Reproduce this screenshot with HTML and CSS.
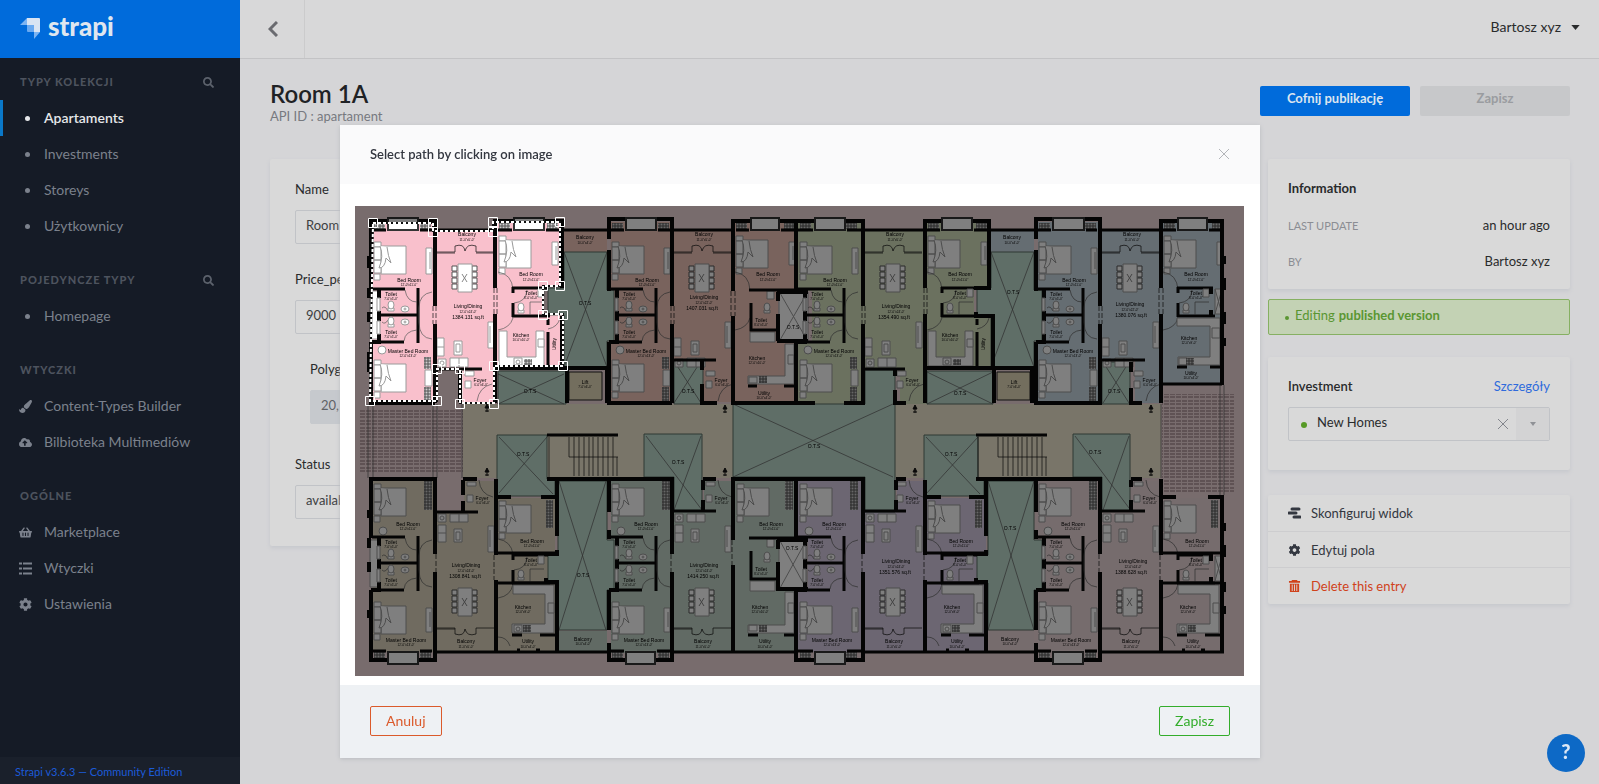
FILE: index.html
```html
<!DOCTYPE html>
<html lang="pl">
<head>
<meta charset="utf-8">
<title>Room 1A</title>
<link rel="stylesheet" href="styles.css">
</head>
<body>
<svg class="sprite" aria-hidden="true">
  <symbol id="i-search" viewBox="0 0 512 512"><path d="M505 442.7L405.3 343c-4.500-4.500-10.600-7-17-7H372c27.600-35.300 44-79.700 44-128C416 93.100 322.900 0 208 0S0 93.100 0 208s93.100 208 208 208c48.300 0 92.700-16.400 128-44v16.300c0 6.400 2.500 12.500 7 17l99.700 99.700c9.400 9.400 24.600 9.400 33.900 0l28.300-28.300c9.400-9.400 9.400-24.600.1-34zM208 336c-70.700 0-128-57.200-128-128 0-70.700 57.200-128 128-128 70.700 0 128 57.200 128 128 0 70.700-57.200 128-128 128z"/></symbol>
  <symbol id="i-cog" viewBox="0 0 512 512"><path d="M487.4 315.7l-42.6-24.6c4.300-23.200 4.300-47 0-70.200l42.600-24.600c4.900-2.800 7.100-8.600 5.500-14-11.100-35.600-30-67.800-54.700-94.600-3.800-4.100-10-5.100-14.800-2.300L380.800 110c-17.900-15.400-38.500-27.300-60.800-35.100V25.800c0-5.600-3.900-10.500-9.400-11.700-36.700-8.200-74.300-7.800-109.200 0-5.500 1.200-9.400 6.100-9.400 11.700V75c-22.200 7.900-42.800 19.800-60.800 35.100L88.700 85.500c-4.900-2.800-11-1.900-14.800 2.300-24.700 26.700-43.600 58.900-54.700 94.600-1.700 5.400.6 11.200 5.500 14L67.300 221c-4.300 23.200-4.300 47 0 70.200l-42.600 24.600c-4.900 2.800-7.100 8.600-5.500 14 11.100 35.600 30 67.800 54.700 94.600 3.800 4.100 10 5.100 14.800 2.300l42.600-24.600c17.900 15.400 38.500 27.300 60.800 35.100v49.200c0 5.600 3.900 10.500 9.400 11.700 36.700 8.200 74.300 7.800 109.200 0 5.500-1.200 9.400-6.100 9.400-11.700v-49.200c22.200-7.900 42.800-19.800 60.800-35.100l42.600 24.600c4.900 2.800 11 1.900 14.800-2.300 24.700-26.700 43.600-58.900 54.700-94.600 1.500-5.500-.7-11.300-5.600-14.100zM256 336c-44.100 0-80-35.900-80-80s35.900-80 80-80 80 35.900 80 80-35.900 80-80 80z"/></symbol>
  <symbol id="i-cloud" viewBox="0 0 640 512"><path d="M537.6 226.6c4.100-10.700 6.400-22.400 6.400-34.600 0-53-43-96-96-96-19.700 0-38.100 6-53.300 16.200C367 64.200 315.300 32 256 32c-88.400 0-160 71.600-160 160 0 2.700.1 5.400.2 8.100C40.200 219.800 0 273.200 0 336c0 79.500 64.500 144 144 144h368c70.700 0 128-57.300 128-128 0-61.900-44-113.600-102.400-125.400zM393.400 288H328v112c0 8.800-7.200 16-16 16h-48c-8.800 0-16-7.200-16-16V288h-65.400c-14.300 0-21.400-17.200-11.300-27.300l105.400-105.400c6.200-6.200 16.400-6.200 22.600 0l105.400 105.400c10.100 10.100 2.900 27.300-11.300 27.300z"/></symbol>
  <symbol id="i-brush" viewBox="0 0 512 512"><path d="M167 309.300c-40.100 2.600-76.500 17.900-97.200 72.300-2.300 6.200-8 10-14.600 10-11.100 0-45.500-27.700-55.200-34.400C0 439.600 37.900 512 128 512c75.900 0 128-43.800 128-120.200 0-3.100-.7-6.100-1-9.100l-88-73.400zM457.900 0c-15.200 0-29.400 6.700-40.200 16.500C213.300 199 192 203.300 192 257.100c0 13.700 3.200 26.800 8.700 38.700l63.800 53.200c7.200 1.800 14.600 3 22.400 3 62.100 0 98.100-45.500 211.200-256.500 7.400-14.300 13.900-29.800 13.900-46C512 20.600 486 0 457.900 0z"/></symbol>
  <symbol id="i-basket" viewBox="0 0 576 512"><path d="M576 216v16c0 13.300-10.700 24-24 24h-8l-26.100 182.800C514.500 462.400 494.300 480 470.400 480H105.600c-23.900 0-44.100-17.600-47.500-41.200L32 256h-8c-13.300 0-24-10.700-24-24v-16c0-13.300 10.700-24 24-24h67.300L198.100 45.200c10.400-14.300 30.400-17.500 44.700-7.100 14.300 10.400 17.500 30.400 7.100 44.700L170.500 192h235L326.100 82.800c-10.400-14.300-7.200-34.300 7.100-44.700 14.300-10.400 34.300-7.200 44.700 7.100L484.700 192H552c13.300 0 24 10.700 24 24zM312 392V280c0-13.300-10.700-24-24-24s-24 10.700-24 24v112c0 13.300 10.700 24 24 24s24-10.700 24-24zm112 0V280c0-13.300-10.700-24-24-24s-24 10.700-24 24v112c0 13.300 10.700 24 24 24s24-10.700 24-24zm-224 0V280c0-13.300-10.700-24-24-24s-24 10.700-24 24v112c0 13.300 10.700 24 24 24s24-10.700 24-24z"/></symbol>
  <symbol id="i-list" viewBox="0 0 13 12"><path d="M0 0h3v2H0zM4 0h9v2H4zM0 5h3v2H0zM4 5h9v2H4zM0 10h3v2H0zM4 10h9v2H4z"/></symbol>
  <symbol id="i-layout" viewBox="0 0 13 11"><path d="M4 0h7a1 1 0 0 1 0 3H4a1 1 0 0 1 0-3zM1 4h7a1 1 0 0 1 0 3H1a1 1 0 0 1 0-3zM6 8h6a1 1 0 0 1 0 3H6a1 1 0 0 1 0-3z"/></symbol>
  <symbol id="i-trash" viewBox="0 0 12 13"><path fill-rule="evenodd" d="M3 0h6v1h3v2H0V1h3zM1 4h10v9H1zM3 5v7h1V5zM5.500 5v7h1V5zM8 5v7h1V5z"/></symbol>
</svg>

<div class="layout">
  <aside class="side">
    <a class="brand" href="#" aria-label="strapi">
      <svg class="brand-mark" viewBox="0 0 21 22"><path fill="#d9e4f3" d="M7 0h12q1 0 1 1v13h-6V7H7z"/><path fill="#7db4f2" d="M0 7L7 0v7zM14 14h6l-6 7z"/><path fill="#6aa9f0" d="M7 7h7v7H8q-1 0-1-1z"/></svg>
      <span>strapi</span>
    </a>
    <nav class="menu">
      <section class="group">
        <h2>Typy kolekcji <button class="find" aria-label="Szukaj"><svg><use href="#i-search"/></svg></button></h2>
        <a class="on" href="#"><i class="dot"></i>Apartaments</a>
        <a href="#"><i class="dot"></i>Investments</a>
        <a href="#"><i class="dot"></i>Storeys</a>
        <a href="#"><i class="dot"></i>Użytkownicy</a>
      </section>
      <section class="group">
        <h2>Pojedyncze typy <button class="find" aria-label="Szukaj"><svg><use href="#i-search"/></svg></button></h2>
        <a href="#"><i class="dot"></i>Homepage</a>
      </section>
      <section class="group">
        <h2>Wtyczki</h2>
        <a href="#"><svg><use href="#i-brush"/></svg>Content-Types Builder</a>
        <a href="#"><svg><use href="#i-cloud"/></svg>Bilbioteka Multimediów</a>
      </section>
      <section class="group">
        <h2>Ogólne</h2>
        <a href="#"><svg><use href="#i-basket"/></svg>Marketplace</a>
        <a href="#"><svg><use href="#i-list"/></svg>Wtyczki</a>
        <a href="#"><svg><use href="#i-cog"/></svg>Ustawienia</a>
      </section>
    </nav>
    <a class="version" href="#">Strapi v3.6.3 — Community Edition</a>
  </aside>

  <div class="page">
    <header class="top">
      <button class="back" aria-label="Wstecz"><svg viewBox="0 0 10 16"><path d="M9 1L2 8l7 7" fill="none" stroke="#6a6b70" stroke-width="3"/></svg></button>
      <button class="user">Bartosz xyz <svg viewBox="0 0 10 6"><path d="M0 0h10L5 6z"/></svg></button>
    </header>
    <main class="content">
      <div class="head">
        <div><h1>Room 1A</h1><p>API ID : apartament</p></div>
        <div class="actions"><button class="primary">Cofnij publikację</button><button class="off" disabled>Zapisz</button></div>
      </div>
      <div class="cols">
        <form class="card fields">
          <div class="field"><label for="f1">Name</label><input id="f1" value="Room 1A"></div>
          <div class="field"><label for="f2">Price_per_meter</label><input id="f2" value="9000"></div>
          <div class="field inner"><label for="f3">Polygon</label><input id="f3" value="20,19" disabled></div>
          <div class="field last"><label for="f4">Status</label><select id="f4"><option>available</option></select></div>
        </form>
        <div class="info">
          <section class="card facts">
            <h3>Information</h3>
            <dl><div><dt>Last update</dt><dd>an hour ago</dd></div><div><dt>By</dt><dd>Bartosz xyz</dd></div></dl>
          </section>
          <p class="state"><i></i>Editing <b>published version</b></p>
          <section class="card relation">
            <div class="rel-head"><label for="rel">Investment</label><a href="#">Szczegóły</a></div>
            <div class="combo"><i></i><select id="rel"><option>New Homes</option></select>
              <button type="button" class="clear" aria-label="Wyczyść"><svg viewBox="0 0 10 10"><path d="M0 0l10 10M10 0L0 10" stroke="#83858c" fill="none"/></svg></button>
              <span class="arrow"><svg viewBox="0 0 6 4"><path d="M0 0h6L3 4z"/></svg></span></div>
          </section>
          <ul class="card links">
            <li><a href="#"><svg><use href="#i-layout"/></svg>Skonfiguruj widok</a></li>
            <li><a href="#"><svg><use href="#i-cog"/></svg>Edytuj pola</a></li>
            <li><a class="danger" href="#"><svg><use href="#i-trash"/></svg>Delete this entry</a></li>
          </ul>
        </div>
      </div>
    </main>
  </div>
</div>
<button class="help" aria-label="Pomoc">?</button>

<div class="shade">
<div class="modal" role="dialog" aria-labelledby="mt">
  <header><h2 id="mt">Select path by clicking on image</h2><button aria-label="Zamknij"><svg viewBox="0 0 10 10"><path d="M0 0l10 10M10 0L0 10" stroke="#b3b5b9" fill="none"/></svg></button></header>
  <div class="modal-body">
<svg class="plan" viewBox="355 206 889 470" role="img" aria-label="Floor plan">
<defs>
  <pattern id="hatch" width="3" height="3" patternUnits="userSpaceOnUse"><path d="M0 0h3v3H0z" fill="#ccc"/><path d="M0 1h3M1 0v3" stroke="#555"/></pattern>
  <pattern id="slats" width="6" height="20" patternUnits="userSpaceOnUse"><path d="M0 1h5M0 4h5M0 8h5M0 11h5M0 14h5M0 17h5" stroke="#8d7175"/></pattern>
  <g id="bed" class="fit">
    <path d="M1-4h7v5H1zM1 28h6v6H1z"/>
    <path d="M8 0h25v28H8z"/><path d="M1 1h7v13H1zM1 14h7v13H1z"/>
    <path d="M7 0Q11 10 6 22Q12 22 13 12L18 17Q15 10 14 1"/>
  </g>
  <g id="wc" class="fit"><path d="M-3 1h6v3h-6z"/><ellipse cy="-2" rx="3" ry="4"/></g>
  <g id="basin" class="fit"><ellipse rx="4" ry="3"/><circle r="1"/></g>
  <g id="table" class="fit">
    <path d="M15 2h5v5h-5zM15 8h5v5h-5zM15 14h5v5h-5zM15 20h5v5h-5zM35 2h5v5h-5zM35 8h5v5h-5zM35 14h5v5h-5zM35 20h5v5h-5z" stroke="#555"/>
    <path d="M21 0h14v28H21z"/><path d="M25 10l5 8M30 10l-5 8" stroke="#888"/>
  </g>
  <g id="baths">
    <g class="w3"><path d="M-1 289H32M5 315H46M7 342H31M45 288V343"/></g>
    <g class="w4"><path d="M-2 342H8M6 288V298M6 311V321M6 334V342"/></g>
    <g class="thin"><path d="M32 290Q34 302 44 302M31 341Q32 331 44 330M59 292Q46 294 46 308V322Q46 338 59 339"/><path d="M9 308q3-3 6 3M9 322q3 3 6-2"/></g>
    <use href="#wc" x="18" y="307"/><use href="#wc" x="18" y="323"/><use href="#basin" x="32" y="309"/><use href="#basin" x="32" y="322"/>
    <path d="M4 298h3v13H4zM4 321h3v13H4z" class="fit"/>
    <g class="lb"><text x="18" y="296">Toilet</text><text x="18" y="334">Toilet</text></g>
    <g class="dim"><text x="18" y="300">7'-0"x5'-0"</text><text x="18" y="338">7'-0"x5'-0"</text></g>
  </g>
  <g id="suiteTop">
    <path d="M1 223h11v6H1zM47 223h11v6H47z" fill="url(#hatch)"/>
    <use href="#bed" y="246"/><path d="M53 248h6v26h-6zM57 252v17" class="fit"/>
    <use href="#baths"/>
    <circle cx="9" cy="350" r="4" class="fit"/><use href="#bed" y="364"/>
    <path d="M51 357h7v12h-7zM51 387h7v14h-7z" fill="url(#hatch)"/><path d="M52 370h7v16h-7z" class="fit"/>
    <g class="lb"><text x="36" y="282">Bed Room</text><text x="35" y="353">Master Bed Room</text></g>
    <g class="dim"><text x="36" y="286">12'-0"x11'-0"</text><text x="35" y="357">12'-0"x13'-0"</text></g>
  </g>
  <g id="suiteLow">
    <use href="#bed" y="488"/><circle cx="10" cy="531" r="4" class="fit"/><path d="M51 481h8v29h-8z" fill="url(#hatch)"/>
    <use href="#baths" y="248"/>
    <use href="#bed" y="606"/><path d="M53 608h6v24h-6zM57 612v15" class="fit"/>
    <path d="M1 652h11v6H1zM47 652h11v6H47z" fill="url(#hatch)"/>
    <g class="lb"><text x="35" y="526">Bed Room</text><text x="33" y="642">Master Bed Room</text></g>
    <g class="dim"><text x="35" y="530">12'-0"x11'-0"</text><text x="33" y="646">12'-0"x13'-0"</text></g>
  </g>
  <g id="livingTop">
    <path class="thin dark" d="M-1 252H18V246M-1 253H18M39 246V252H57M39 253H57M18 246Q27 243 28 251Q30 243 39 246"/>
    <use href="#table" x="0" y="264"/>
    <path class="fit" d="M0 338h7v18H0zM17 341h8v14h-8zM19 344h4v8h-4zM13 358h18v9H13zM22 358v9M0 347h7M51 322h6v26h-6zM53 326v17M1 359h8v8H1z"/><circle class="fit" cx="5" cy="363" r="2"/>
    <g class="lb"><text x="30" y="236">Balcony</text></g><g class="dim"><text x="30" y="241">11'-0"x5'-0"</text></g>
  </g>
  <g id="livingLow">
    <path class="fit" d="M13 514h18v8H13zM22 514v8M1 525h8v17H1zM1 533h8M17 529h8v13h-8zM19 532h4v8h-4zM51 526h6v26h-6zM53 530v17M1 514h8v8H1z"/><circle class="fit" cx="5" cy="518" r="2"/>
    <use href="#table" y="588"/>
    <path class="thin dark" d="M0 628H18V634M0 629H18M39 634V628H57M18 634Q27 637 28 629Q30 637 39 634"/>
    <g class="lb"><text x="29" y="643">Balcony</text></g><g class="dim"><text x="29" y="648">11'-0"x5'-0"</text></g>
  </g>
  <g id="bedTop">
    <path d="M1 223h11v6H1zM49 223h11v6H49z" fill="url(#hatch)"/>
    <use href="#bed" y="240"/><path d="M54 242h6v23h-6zM58 246v14" class="fit"/>
    <path class="thin" d="M0 272Q14 274 15 290M15 318Q12 328 0 330"/>
    <g class="lb"><text x="33" y="276">Bed Room</text></g><g class="dim"><text x="33" y="281">12'-0"x11'-0"</text></g>
  </g>
  <g id="bath2">
    <path class="w3" d="M14 288H50M15 287V293M15 303V317M14 316H52"/>
    <use href="#wc" x="23" y="309"/><path class="fit" d="M40 289h6v8h-6z"/><path class="thin" d="M32 302H46M32 302V315M16 303Q28 302 29 290"/>
    <g class="lb"><text x="33" y="295">Toilet</text></g><g class="dim"><text x="33" y="299">8'-0"x5'-0"</text></g>
  </g>
  <g id="kitchTop">
    <path class="fit" d="M1 331H9V357H38V331H46V366H1z"/><path class="fit" d="M16 358h8v7h-8zM40 339h6v8h-6z"/><circle class="fit" cx="20" cy="362" r="2"/>
    <path d="M26 359h8v6h-8z" fill="url(#hatch)"/>
    <path class="w3" d="M50 319V325M50 332V366"/><path class="thin" d="M50 329Q60 327 62 318"/>
    <g class="lb"><text x="23" y="337">Kitchen</text><text transform="translate(58 344) rotate(-90)">Utility</text></g><g class="dim"><text x="23" y="341">10'-0"x10'-0"</text></g>
  </g>
  <g id="bedLow">
    <use href="#bed" y="505"/><path d="M48 500h7v28h-7z" fill="url(#hatch)"/>
    <path class="thin" d="M0 539Q13 541 15 554M15 584Q13 596 0 598M0 637Q9 637 12 646"/>
    <use href="#bath2" y="267"/>
    <path class="fit" d="M15 585H56V633H14V624H47V594H15z"/><path class="fit" d="M16 625h8v7h-8zM50 603h6v10h-6z"/><circle class="fit" cx="20" cy="629" r="2"/>
    <path d="M25 625h8v7h-8z" fill="url(#hatch)"/><path class="w3" d="M14 635H24M42 635H57M19 650H22M38 650H42"/>
    <g class="lb"><text x="34" y="543">Bed Room</text><text x="25" y="609">Kitchen</text><text x="30" y="643">Utility</text></g>
    <g class="dim"><text x="34" y="547">12'-0"x11'-0"</text><text x="25" y="613">12'-0"x9'-0"</text><text x="30" y="648">10'-0"x4'-0"</text></g>
  </g>
  <g id="foyer"><path class="fit" d="M1 2h9v5H1zM1 12h6v7H1z"/><path class="thin" d="M13 32Q15 18 28 15"/><g class="lb"><text x="16" y="13">Foyer</text></g><g class="dim"><text x="17" y="17">6'-0"x6'-0"</text></g></g>
  <g id="foyerLow"><path class="fit" d="M1 2h9v4H1zM1 15h6v7H1z"/><path class="thin" d="M13 0Q14 14 27 17"/><g class="lb"><text x="16" y="20">Foyer</text></g><g class="dim"><text x="17" y="24">6'-0"x6'-0"</text></g></g>
  <g id="stairs"><path class="w3" d="M0 435H71"/><path class="thin dark" d="M22 437V457M27 437V476M32 437V476M37 437V476M42 437V476M46 437V476M51 437V476M56 437V476M61 437V476M66 437V476M70 457V476M22 457H71M2 437V477"/></g>
  <path id="door" d="M0 3v6M-2 5l2-4 2 4zM-2 8h4" fill="#111" stroke="#111"/>
</defs>

<path fill="#f0d8da" d="M355 206h890v470H355z"/>
<path fill="#f3ebd2" d="M463 404h698v74H463z"/>
<path fill="url(#slats)" d="M359 409h104v64H359zM1162 394h72v99h-72z"/>
<path class="thin" d="M368 404V478M373 404V478M433 404V478M437 404V478M462 404V478M1161 404V478M1220 385V495M1224 385V495"/>

<path fill="#f9c0cc" d="M373 222h60v8h62v-8h65v64h-17v29h20v52h-65v37h-35v-36h-27v34h-64z"/>
<path fill="#f2c7bb" d="M564 230h43v22h-43zM611 222h62v8h60v-8h62v69h-17v51h17v61h-62v-1h-30v-42h-30v43h-64z"/>
<path fill="#d6e2bf" d="M798 222h64v8h63v-8h63v64h-14v29h18v52h-65v37h-27v-36h-35v36h-67v-62h14v-51h-14z"/>
<path fill="#cbdae4" d="M991 230h43v22h-43zM1038 222h60v8h62v-8h60v146h3v17h-60v18h-28v-42h-31v43h-66z"/>
<path fill="#e0d7c0" d="M373 481h60v31h31v-31h31v17h60v154H373z"/>
<path fill="#c3d5c8" d="M558 631h49v20h-49zM611 481h60v31h33v-31h92v58h-17v50h17v64H611z"/>
<path fill="#d8cde4" d="M798 481h64v31h35v-31h28v17h61v154h-61H798v-64h10v-50h-10z"/>
<path fill="#ecd8da" d="M988 631h46v20h-46zM1038 481h60v31h33v-31h30v17h60v154h-183z"/>

<g fill="#bfdccf" stroke="#5c7066">
  <path d="M564 252h43v38h7v51h-7v26h-43v-52h-16v-27h16zM498 371h68v33h-68zM674 360h29v44h-29zM733 404h132v-34h30v142h-30v-35H733zM991 252h43v38h8v51h-8v26h-43v-52h-14v-27h14zM927 371h66v33h-66zM1102 362h28v42h-28z"/>
  <path d="M497 435h50v44h8v17h-58zM644 434h58v77h-28v-34h-30zM924 435h54v44h6v17h-60zM1073 434h57v77h-28v-34h-29zM558 481h49v59h7v50h-7v40h-49v-47h-10v-28h10zM988 481h46v59h8v50h-8v40h-46v-47h-11v-28h11z"/>
</g>
<path class="thin" d="M564 252l43 115M607 252l-43 115M498 374l66 30M564 374l-66 30M674 361l27 42M701 361l-27 42M733 404l160 73M893 404l-160 73M991 252l43 115M1034 252l-43 115M927 372l66 32M993 372l-66 32M1103 362l26 41M1129 362l-26 41M499 437l54 57M547 437l-48 56M646 436l56 74M701 436l-27 74M926 437l54 57M978 437l-52 57M1075 436l54 72M1129 436l-26 74M559 481l47 149M606 481l-47 149M988 481l46 149M1034 481l-46 149"/>
<path fill="#e6dcbc" stroke="#222" d="M569 372h33v28h-33zM997 372h33v28h-33z"/>
<g class="fit"><path d="M779 292h29v49h-29zM780 293l27 47M807 293l-27 47M779 540h28v49h-28zM780 541l26 47M806 541l-26 47M1215 289h7v25h-7zM1215 289l7 25M1222 289l-7 25M1215 556h7v25h-7zM1215 556l7 25M1222 556l-7 25M370 291h8v48h-8zM370 540h8v47h-8z"/></g>

<use href="#suiteTop" x="373"/><use href="#suiteTop" x="611"/><use href="#suiteTop" x="799"/><use href="#suiteTop" x="1038"/>
<use href="#suiteLow" x="373"/><use href="#suiteLow" x="611"/><use href="#suiteLow" x="799"/><use href="#suiteLow" x="1038"/>
<use href="#livingTop" x="437"/><use href="#livingTop" x="674"/><use href="#livingTop" x="865"/><use href="#livingTop" x="1102"/>
<use href="#livingLow" x="437"/><use href="#livingLow" x="674"/><use href="#livingLow" x="865"/><use href="#livingLow" x="1102"/>
<use href="#bedTop" x="498"/><use href="#bedTop" x="735"/><use href="#bedTop" x="927"/><use href="#bedTop" x="1163"/>
<use href="#bath2" x="498"/><use href="#bath2" x="927"/><use href="#bath2" x="1163"/>
<use href="#kitchTop" x="498"/><use href="#kitchTop" x="927"/>
<use href="#bedLow" x="498"/><use href="#bedLow" x="927"/><use href="#bedLow" x="1163"/>
<use href="#foyer" x="464" y="369"/><use href="#foyer" x="705" y="369"/><use href="#foyer" x="896" y="369"/><use href="#foyer" x="1133" y="369"/>
<use href="#foyerLow" x="466" y="480"/><use href="#foyerLow" x="705" y="480"/><use href="#foyerLow" x="896" y="480"/><use href="#foyerLow" x="1133" y="480"/>
<use href="#stairs" x="547"/><use href="#stairs" x="976"/>

<g>
  <use href="#wc" x="767" y="309"/><use href="#wc" x="767" y="558"/>
  <path class="fit" d="M767 291h7v8h-7zM767 539h7v8h-7zM750 332h25v10h-25zM785 344h9v40H748v-8h37zM788 355h6v9h-6zM750 581h25v10h-25zM785 592h9v41H748v-8h37zM788 603h6v10h-6zM749 377h8v6h-8zM749 625h8v6h-8z"/>
  <path d="M759 376h8v7h-8zM759 625h8v7h-8z" fill="url(#hatch)"/>
  <path class="fit" d="M1177 318h43v47h-42v-8h32v-31h-33zM1212 328h8v10h-8zM1179 358h8v7h-8z"/><path d="M1186 358h8v7h-8z" fill="url(#hatch)"/>
  <use href="#bed" x="736" y="488"/><path d="M785 481h8v29h-8z" fill="url(#hatch)"/>
  <g class="lb"><text x="761" y="322">Toilet</text><text x="757" y="360">Kitchen</text><text x="764" y="395">Utility</text><text x="761" y="571">Toilet</text><text x="760" y="609">Kitchen</text><text x="765" y="643">Utility</text><text x="771" y="526">Bed Room</text><text x="1189" y="340">Kitchen</text><text x="1191" y="375">Utility</text>
  <text x="585" y="239">Balcony</text><text x="1012" y="239">Balcony</text><text x="583" y="641">Balcony</text><text x="1010" y="641">Balcony</text></g>
  <g class="dim"><text x="761" y="326">8'-0"x5'-0"</text><text x="757" y="364">12'-0"x10'-0"</text><text x="764" y="399">10'-0"x4'-0"</text><text x="761" y="575">8'-0"x5'-0"</text><text x="760" y="613">12'-0"x10'-0"</text><text x="765" y="648">10'-0"x4'-0"</text><text x="771" y="530">12'-0"x11'-0"</text><text x="1189" y="344">12'-0"x9'-0"</text><text x="1191" y="379">10'-0"x4'-0"</text><text x="585" y="244">10'-0"x4'-0"</text><text x="1012" y="244">10'-0"x4'-0"</text><text x="583" y="645">10'-0"x4'-0"</text><text x="1010" y="645">10'-0"x4'-0"</text><text x="585" y="388">7'-0"x6'-0"</text><text x="1014" y="388">7'-0"x6'-0"</text></g>
  <g class="lb">
    <text x="468" y="308">Living/Dining</text><text x="468" y="319">1384.131 sq.ft</text><text x="704" y="299">Living/Dining</text><text x="702" y="310">1407.031 sq.ft</text><text x="896" y="308">Living/Dining</text><text x="894" y="319">1354.490 sq.ft</text><text x="1130" y="306">Living/Dining</text><text x="1131" y="317">1380.076 sq.ft</text>
    <text x="466" y="567">Living/Dining</text><text x="465" y="578">1308.841 sq.ft</text><text x="704" y="567">Living/Dining</text><text x="703" y="578">1414.250 sq.ft</text><text x="896" y="563">Living/Dining</text><text x="895" y="574">1351.576 sq.ft</text><text x="1133" y="563">Living/Dining</text><text x="1131" y="574">1388.628 sq.ft</text>
    <text x="585" y="305">O.T.S</text><text x="530" y="393">O.T.S</text><text x="688" y="393">O.T.S</text><text x="793" y="329">O.T.S</text><text x="1013" y="294">O.T.S</text><text x="960" y="395">O.T.S</text><text x="1114" y="393">O.T.S</text><text x="523" y="456">O.T.S</text><text x="678" y="464">O.T.S</text><text x="814" y="448">O.T.S</text><text x="951" y="456">O.T.S</text><text x="1095" y="454">O.T.S</text><text x="583" y="577">O.T.S</text><text x="792" y="550">O.T.S</text><text x="1010" y="530">O.T.S</text><text x="585" y="384">Lift</text><text x="1014" y="384">Lift</text>
  </g>
  <g class="dim"><text x="468" y="313">12'-0"x24'-0"</text><text x="704" y="304">12'-0"x22'-0"</text><text x="896" y="313">12'-0"x24'-0"</text><text x="1130" y="311">12'-0"x22'-0"</text><text x="466" y="572">12'-0"x24'-0"</text><text x="704" y="572">12'-0"x24'-0"</text><text x="896" y="568">12'-0"x24'-0"</text><text x="1133" y="568">12'-0"x24'-0"</text></g>
</g>

<g class="w4">
  <path d="M371 220V289M371 342V403M369 221H435M435 219V306M435 324V403M495 219V288M495 314V403M493 221H562V288M562 316V368M496 368H607V403M567 368V403M369 403H435M460 402V371M608 370V403"/>
  <path d="M609 239V219H672V306M672 324V403M609 250V291M609 342V403H672M733 219V291M733 316V403M731 221H796V292M796 341V403H731M702 384V403H717M702 360V370M796 221H863V306M863 324V403H844M796 403H815"/>
  <path d="M925 219V288M925 314V403M923 221H989V288H974M976 312V316H993V368M925 368H1036M994 368V403M1032 368V403M1036 239V219H1100V306M1100 324V403H1036V342M1036 250V291M1161 219V288M1161 314V403M1159 221H1222V385M1131 362V372M1131 388V403H1142M895 370V376M895 390V403H906"/>
  <path d="M371 480V538M371 590V662M369 479H435V554M435 572V662M463 480V495M463 501V511M463 479H477M496 479V555M496 580V653M369 660H388M418 660H437"/>
  <path d="M557 479V536M557 550V554H544M546 578V582H557V652M547 479H672V554M672 572V662M609 479V512M609 530V539M609 590V630M609 643V662M607 660H627M656 660H672M703 480V490M703 500V511M703 479H716M733 480V540M733 565V652M731 479H863V554M863 572V662M796 479V540M796 589V662M796 660H815M845 660H863"/>
  <path d="M896 480V490M896 500V511M896 479H906M925 480V555M925 580V653M986 479V536M986 550V554H974M976 578V582H986V652M976 479H1100V554M1100 572V662M1036 479V512M1036 530V539M1036 590V630M1036 643V662M1036 660H1053M1083 660H1102M1131 480V487M1131 500V511M1131 479H1142M1161 479V555M1161 580V653M1161 497H1176M1208 497H1224M1222 497V653M777 292H808M777 341H808M778 292V301M778 314V341M778 540V549M778 562V589H808M777 540H808M496 497H511M541 497H556M925 497H941M969 497H985"/>
  <path d="M369 256V268M369 288V298M369 312V322M369 352V372M369 510V518M369 538V548M369 562V572M369 610V618M1224 256V264M1224 278V290M1224 312V324M1224 338V346M1224 523V531M1224 545V557M1224 582V592M1224 606V614M1211 288V294M1211 310V316M1211 555V561M1211 577V583"/>
</g>
<g class="w3">
  <path d="M435 230H495M562 230H609M672 230H733M863 230H925M989 230H1036M1100 230H1161M435 652H497M496 652H609M672 652H796M863 652H986M986 652H1036M1100 652H1224M748 386H757M784 386H796M672 360H716M435 369H482M863 369H905M1100 360H1145M435 512H478M672 511H716M863 511H906M1100 511H1145M748 635H758M784 635H796M1177 367H1187M1210 367H1221M1163 384H1222M498 553H557M927 553H986M1163 553H1222M498 583H557M927 583H986M1163 583H1222M749 538H796M751 303V330H776M749 290H796M751 551V579H776"/>
</g>
<path class="thin dark" d="M436 306v18M433 306v18M494 288v26M497 288v26M671 306v18M674 306v18M731 291v25M735 291v25M862 306v18M865 306v18M924 288v26M927 288v26M1099 306v18M1102 306v18M1159 288v26M1163 288v26M436 554v18M494 555v25M671 554v18M732 540v25M862 554v18M924 555v25M1099 554v18M1160 555v25" stroke-dasharray="5 2"/>
<g class="bay">
  <path d="M388 218h30v12h-30zM514 218h30v12h-30zM626 218h30v12h-30zM751 218h28v12h-28zM815 218h30v12h-30zM942 218h30v12h-30zM1053 218h31v12h-31zM1178 218h29v12h-29z"/>
  <path d="M388 652h30v12h-30zM626 652h29v12h-29zM815 652h30v12h-30zM1053 652h30v12h-30z"/>
</g>
<path class="w3" d="M373 230H386M420 230H432M498 230H512M546 230H560M611 230H624M658 230H670M736 230H749M781 230H794M798 230H813M847 230H861M927 230H940M974 230H987M1038 230H1051M1086 230H1097M1163 230H1176M1209 230H1220M373 651H386M420 651H432M611 651H624M657 651H670M798 651H813M847 651H861M1038 651H1051M1085 651H1097"/>
<use href="#door" x="487" y="403"/><use href="#door" x="725" y="404"/><use href="#door" x="915" y="404"/><use href="#door" x="1151" y="404"/><use href="#door" x="487" y="467"/><use href="#door" x="725" y="467"/><use href="#door" x="915" y="467"/><use href="#door" x="1151" y="467"/>

<path fill="#000" fill-opacity=".5" fill-rule="evenodd" d="M355 206h890v470H355zM373 223L433 223V231H493V222H560V286H543V314H563V366H494V403H460V369H437V401H370z"/>
<path fill="none" stroke="#111" stroke-width="2" d="M373 223H433V231H493V222H560V286H543V314H563V366H494V403H460V369H437V401H370z"/>
<path fill="none" stroke="#fff" stroke-width="2" stroke-dasharray="3 2" d="M373 223H433V231H493V222H560V286H543V314H563V366H494V403H460V369H437V401H370z"/>
<path fill="none" stroke="#fff" d="M368.500 218.500h9v9h-9zM428.500 218.500h9v9h-9zM428.500 227.500h9v9h-9zM488.500 227.500h9v9h-9zM488.500 217.500h9v9h-9zM555.500 217.500h9v9h-9zM555.500 281.500h9v9h-9zM538.500 281.500h9v9h-9zM538.500 310.500h9v9h-9zM558.500 310.500h9v9h-9zM558.500 361.500h9v9h-9zM489.500 361.500h9v9h-9zM489.500 399.500h9v9h-9zM455.500 399.500h9v9h-9zM455.500 364.500h9v9h-9zM432.500 364.500h9v9h-9zM432.500 396.500h9v9h-9zM365.500 396.500h9v9h-9z"/>
</svg>
  </div>
  <footer><button class="cancel">Anuluj</button><button class="save">Zapisz</button></footer>
</div>
</div>
</body>
</html>
```
FILE: styles.css
```css
* { box-sizing: border-box; }
body { margin: 0; font: 13px/18px Lato, "Open Sans", sans-serif; color: #292b2c; background: #d5d5d7; }
h1, h2, h3, p, dl, dd, ul { margin: 0; padding: 0; font-weight: 400; }
a { color: inherit; text-decoration: none; }
button, input, select { font: inherit; color: inherit; margin: 0; padding: 0; border: 0; background: none; }
select { appearance: none; }
svg { display: block; fill: currentColor; }
.sprite { position: absolute; width: 0; height: 0; }

.layout { display: flex; min-height: 100vh; }

.side { flex: 0 0 240px; display: flex; flex-direction: column; background: #151b26; color: #7b818c; }
.brand { display: flex; align-items: center; height: 58px; padding: 0 20px; gap: 7px; background: #006bdb; color: #dfe6ef; font-size: 26px; font-weight: 900; }
.brand span { line-height: 28px; padding-bottom: 6px; }
.brand-mark { width: 21px; height: 22px; }
.menu { flex: 1; display: flex; flex-direction: column; gap: 18px; padding-top: 6px; }
.group h2 { display: flex; justify-content: space-between; align-items: center; height: 36px; padding: 0 26px 0 20px; font-size: 11px; font-weight: 900; letter-spacing: 1px; text-transform: uppercase; color: #4d535e; }
.find svg { width: 11px; height: 11px; color: #5c626c; }
.group a { display: flex; align-items: center; height: 36px; padding-left: 19px; font-size: 14px; }
.group a svg { width: 13px; height: 13px; margin-right: 12px; }
.dot { width: 5px; height: 5px; margin: 0 14px 0 6px; border-radius: 50%; background: currentColor; }
.group .on { color: #e6e8ea; font-weight: 600; padding-left: 16px; border-left: 3px solid #0a78c8; }
.version { padding: 0 15px; height: 27px; line-height: 29px; background: #1a202b; color: #1c5bd8; font-size: 11px; }

.page { flex: 1; min-width: 0; }
.top { display: flex; justify-content: space-between; height: 59px; border-bottom: 1px solid #c3c3c5; background: #d8d8d9; }
.back { width: 65px; border-right: 1px solid #cbcbcc; padding-left: 28px; }
.back svg { width: 10px; height: 16px; }
.user { display: flex; align-items: center; gap: 10px; padding: 0 19px 4px 0; font-size: 14px; }
.user svg { width: 9px; height: 5px; }

.content { padding: 22px 29px 0 30px; }
.head { display: flex; justify-content: space-between; }
.head h1 { font-size: 24px; line-height: 26px; font-weight: 600; color: #1f2225; }
.head p { color: #77797f; }
.actions { display: flex; gap: 10px; padding-top: 5px; }
.actions button { width: 150px; height: 30px; border-radius: 2px; padding-bottom: 6px; font-weight: 700; }
.primary { background: #006bdb; color: #dbe5f0; }
.off { background: #c7c8ca; color: #9a9ca0; }

.cols { display: flex; align-items: flex-start; gap: 38px; padding-top: 34px; }
.card { border-radius: 2px; background: #d9d9d9; box-shadow: 0 2px 4px #c5c7cd; }
.fields { flex: 1; display: grid; gap: 26px; padding: 21px 25px 27px; }
.field { display: grid; gap: 12px; }
.field input, .field select { width: 100%; height: 34px; padding: 0 10px 4px; border: 1px solid #c1c3c7; border-radius: 2px; color: #3d3f42; }
.field.inner { padding: 0 15px; }
.field input:disabled { background: #c6c9cd; border-color: #c6c9cd; color: #5f6266; }
.field.last { padding-top: 5px; }

.info { flex: 0 0 302px; }
.facts { padding: 20px 20px 19px; }
.facts h3 { font-weight: 700; font-size: 13px; }
.facts dl { padding-top: 10px; }
.facts dl div { display: flex; justify-content: space-between; align-items: center; height: 36px; }
.facts dl div + div { height: 27px; padding-top: 8px; }
.facts dt { font-size: 11px; color: #8b8d93; text-transform: uppercase; padding-top: 2px; }
.state { display: flex; align-items: center; gap: 4px; height: 36px; margin: 10px 0 22px; padding: 0 16px 5px; border: 1px solid #86b062; border-radius: 2px; background: #c3d2b4; color: #5a9632; }
.state i { width: 4px; height: 4px; margin: 6px 2px 0 0; border-radius: 50%; background: #5a9632; }
.relation { padding: 20px 20px 29px; }
.rel-head { display: flex; justify-content: space-between; padding-bottom: 12px; }
.rel-head label { font-weight: 600; }
.rel-head a { color: #2f6bdc; }
.combo { display: flex; height: 34px; border: 1px solid #c1c3c7; border-radius: 2px; align-items: center; }
.combo i { width: 6px; height: 6px; margin: 2px 10px 0 12px; border-radius: 50%; background: #579a26; }
.combo select { flex: 1; height: 32px; padding-bottom: 4px; }
.clear svg { width: 10px; height: 10px; }
.clear { margin-right: 8px; }
.arrow { display: grid; place-items: center; width: 33px; height: 32px; background: #d3d3d4; color: #8f9196; }
.arrow svg { width: 6px; height: 4px; }
.links { list-style: none; margin-top: 25px; color: #333740; }
.links li + li { border-top: 1px solid #cdcdcf; }
.links li { height: 36px; }
.links li:last-child { height: 37px; }
.links a { display: flex; align-items: center; gap: 10px; height: 35px; padding: 0 20px; }
.links svg { width: 13px; height: 12px; }
.links .danger { color: #d0421b; }
.help { position: fixed; right: 14px; bottom: 12px; width: 38px; height: 38px; padding-bottom: 4px; border-radius: 50%; background: #0d69c6; color: #dce8f6; font-size: 20px; font-weight: 900; }

.shade { position: fixed; inset: 0; display: flex; justify-content: center; align-items: flex-start; padding: 125px 0 0 1px; }
.modal { width: 920px; max-width: 100%; background: #fff; box-shadow: 0 1px 4px #b9bbc0; }
.modal header { display: flex; justify-content: space-between; align-items: center; height: 59px; padding: 0 31px 2px 30px; background: #fafafb; }
.modal header h2 { font-size: 13px; font-weight: 600; color: #333740; }
.modal header svg { width: 10px; height: 10px; }
.modal-body { padding: 22px 16px 9px 15px; }
.modal footer { display: flex; justify-content: space-between; padding: 21px 30px 22px; background: #eef1f4; }
.modal footer button { height: 30px; padding: 0 15px 1px; border: 1px solid; border-radius: 2px; font-size: 14px; }
.cancel { color: #db5a2b; }
.save { color: #33ad2b; }

.plan { width: 100%; font-family: "Liberation Sans", Arial, sans-serif; }
.fit { fill: #fff; stroke: #9a9a9a; }
.thin { fill: none; stroke: #5b5b5b; stroke-width: 1px; stroke-opacity: .7; }
.dark { stroke: #111; }
.w3 { fill: none; stroke: #080808; stroke-width: 3px; }
.w4 { fill: none; stroke: #080808; stroke-width: 4px; }
.lb { font-size: 5px; text-anchor: middle; fill: #000; }
.dim { font-size: 3px; text-anchor: middle; fill: #000; }
.bay { fill: #fff; stroke: #333; stroke-width: 2px; }
```
